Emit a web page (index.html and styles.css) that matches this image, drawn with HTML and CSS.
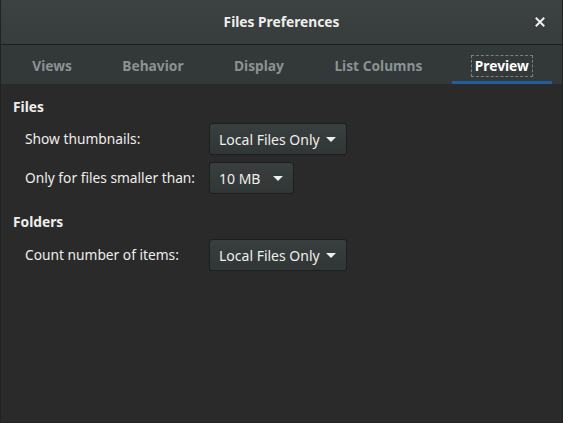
FILE: index.html
```html
<!DOCTYPE html>
<html>
<head>
<meta charset="utf-8">
<link rel="stylesheet" href="styles.css">
</head>
<body>
<div class="window">
  <div class="header">
    <div class="title">Files Preferences</div>
    <div class="close">
      <svg width="10" height="10" viewBox="0 0 10 10"><path d="M1.5 1.5 L8.5 8.5 M8.5 1.5 L1.5 8.5" stroke="#eeeeec" stroke-width="2" stroke-linecap="square"/></svg>
    </div>
  </div>
  <div class="tabs">
    <div class="tab"><span>Views</span></div>
    <div class="tab"><span>Behavior</span></div>
    <div class="tab"><span>Display</span></div>
    <div class="tab"><span>List Columns</span></div>
    <div class="tab active"><span class="focus">Preview</span></div>
  </div>
  <div class="content">
    <div class="grid">
      <div class="heading">Files</div>
      <div class="label">Show thumbnails:</div>
      <div class="combo"><span>Local Files Only</span><i class="arrow"></i></div>
      <div class="label">Only for files smaller than:</div>
      <div class="combo small"><span>10 MB</span><i class="arrow"></i></div>
      <div class="heading next">Folders</div>
      <div class="label">Count number of items:</div>
      <div class="combo"><span>Local Files Only</span><i class="arrow"></i></div>
    </div>
  </div>
</div>
</body>
</html>
```
FILE: styles.css
```css
html, body {
  margin: 0;
  padding: 0;
  background: #2a2a2a;
}
.window {
  width: 563px;
  height: 423px;
  box-sizing: border-box;
  border: 1px solid #1f2322;
  border-top: none;
  display: flex;
  flex-direction: column;
  font-family: "Noto Sans", sans-serif;
  font-size: 13.75px;
  color: #eeeeec;
}
.header {
  height: 44px;
  flex: none;
  background: linear-gradient(#3c4142, #373c3c);
  border-bottom: 1px solid #1c1f1f;
  display: flex;
  align-items: center;
  justify-content: center;
  position: relative;
}
.title {
  font-weight: bold;
  font-size: 13.75px;
  line-height: 18px;
}
.close {
  position: absolute;
  right: 17px;
  top: 17px;
  width: 10px;
  height: 10px;
  display: flex;
}
.tabs {
  height: 37px;
  flex: none;
  background: #333838;
  display: flex;
  padding: 2px 6px 0 6px;
}
.tab {
  flex: 1 1 auto;
  display: flex;
  align-items: center;
  justify-content: center;
  font-weight: bold;
  line-height: 18px;
  color: #8b9292;
  position: relative;
}
.tab.active {
  color: #ffffff;
}
.tab.active::after {
  content: "";
  position: absolute;
  left: 4px;
  right: 4px;
  bottom: 0;
  height: 3px;
  background: #215d9c;
}
.focus {
  outline: 1px dashed #7a8080;
  outline-offset: 1px;
  padding: 0 2px;
}
.content {
  flex: 1;
  padding: 13px 12px 0 12px;
}
.grid {
  display: grid;
  grid-template-columns: 196px auto;
  justify-content: start;
  row-gap: 7px;
  align-items: center;
}
.heading {
  grid-column: 1 / span 2;
  font-weight: bold;
  line-height: 19px;
}
.heading.next {
  margin-top: 11px;
  margin-bottom: 1px;
}
.label {
  padding-left: 12px;
  line-height: 18px;
}
.combo {
  justify-self: start;
  height: 32px;
  box-sizing: border-box;
  border: 1px solid #1b1f1f;
  border-radius: 3px;
  background: linear-gradient(#393e3f, #303535);
  display: flex;
  align-items: center;
  padding: 0 10px 0 9px;
  gap: 6px;
  font-size: 14px;
}
.combo.small {
  gap: 13px;
}
.arrow {
  width: 0;
  height: 0;
  border-left: 5px solid transparent;
  border-right: 5px solid transparent;
  border-top: 5px solid #eeeeec;
  margin-top: 1px;
}
```
